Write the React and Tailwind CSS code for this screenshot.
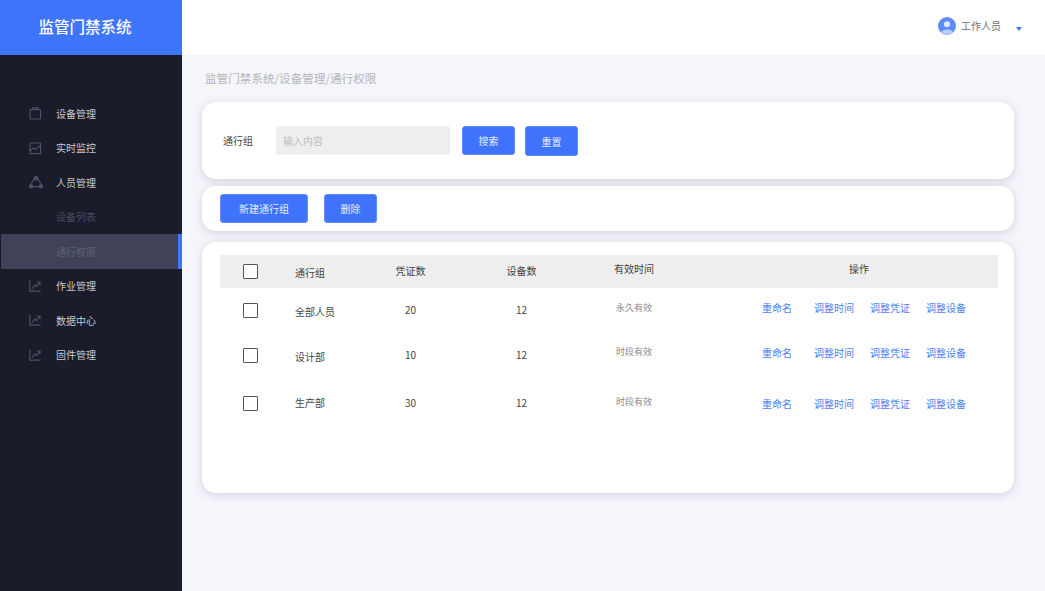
import React from 'react';

const cardShadow = 'shadow-[0_2px_9px_rgba(70,70,100,0.2)]';
const btn = 'flex items-center justify-center rounded-[3px] bg-[#3f73fb] border border-[#5d8afc] text-[10px] text-[#e6ecff]';

const IconBag = () => (
  <svg width="13" height="13" viewBox="0 0 13 13" fill="none" stroke="#4b5069" strokeWidth="1.2">
    <rect x="1" y="2.6" width="10.6" height="9.4" rx="0.8" />
    <path d="M3.6 2.6 V0.8 H9 V2.6" />
  </svg>
);

const IconMonitor = () => (
  <svg width="13" height="13" viewBox="0 0 13 13" fill="none" stroke="#4b5069" strokeWidth="1.2">
    <rect x="1" y="1" width="10.6" height="10.6" rx="0.6" />
    <path d="M1.4 9 L4.4 6 L6.6 7.6 L11 3.8" />
  </svg>
);

const IconPeople = () => (
  <svg width="14" height="13" viewBox="0 0 14 13" fill="none" stroke="#4b5069" strokeWidth="1.1">
    <path d="M5 2.8 L2 8.6 M9 2.8 L12 8.6 M3.6 10.6 H10.4" />
    <circle cx="7" cy="2.2" r="1.7" fill="#4b5069" />
    <circle cx="2" cy="10.2" r="1.7" fill="#4b5069" />
    <circle cx="12" cy="10.2" r="1.7" fill="#4b5069" />
  </svg>
);

const IconTrend = () => (
  <svg width="12" height="12" viewBox="0 0 12 12" fill="none" stroke="#4b5069" strokeWidth="1.2">
    <path d="M0.8 0.6 V11.2 H11.6" />
    <path d="M3 8.6 L6 5 L7.6 6.6 L10.8 2.4" />
    <path d="M7.8 2 H11 V5" />
  </svg>
);

const menu = [
  { label: '设备管理', icon: <IconBag /> },
  { label: '实时监控', icon: <IconMonitor /> },
  { label: '人员管理', icon: <IconPeople /> },
  { label: '设备列表', sub: true },
  { label: '通行权限', sub: true, active: true },
  { label: '作业管理', icon: <IconTrend /> },
  { label: '数据中心', icon: <IconTrend /> },
  { label: '固件管理', icon: <IconTrend /> },
];

const rows = [
  { name: '全部人员', count: 20, time: '永久有效', h: 'h-[45px]', nameCls: 'mt-px', countCls: 'mb-[2px]', timeCls: 'mb-[6px]', opsCls: 'mb-[7px]' },
  { name: '设计部', count: 10, time: '时段有效', h: 'h-[45px]', nameCls: 'mt-px', countCls: 'mb-[2px]', timeCls: 'mb-[7px]', opsCls: 'mb-[7px]' },
  { name: '生产部', count: 30, time: '时段有效', h: 'h-[51px]', nameCls: 'mb-[3px]', countCls: 'mb-[3px]', timeCls: 'mb-[3px]', opsCls: 'mb-px' },
];

const Checkbox = () => <div className="w-[15px] h-[15px] border border-[#555] rounded-[1px] bg-white" />;

const cols = 'grid grid-cols-[75px_75px_81px_141px_84px_1fr] items-center';

const App = () => (
  <div className="flex w-full h-[591px] overflow-hidden bg-[#f5f6fb] font-['Noto_Sans_CJK_SC',sans-serif]">
    {/* Sidebar */}
    <aside className="w-[182px] shrink-0 bg-[#1a1d29]">
      <div className="h-[55px] bg-[#3f75fd] flex items-center justify-center pr-[12px] pb-[2px] text-white text-[15.5px] font-medium">
        监管门禁系统
      </div>
      <nav className="pt-[41px]">
        {menu.map(({ label, icon, sub, active }) => (
          <div
            key={label}
            className={`h-[34.5px] flex items-center pl-[56px] text-[10px] relative ${active ? 'bg-[#3f4259] ml-px text-[#5f6379]' : sub ? 'text-[#484c61]' : 'text-[#c6c8d0]'}`}
          >
            {icon && <span className="absolute left-[29px] top-[11px] flex">{icon}</span>}
            <span className={active ? '-ml-px' : ''}>{label}</span>
            {active && <span className="absolute right-0 top-0 bottom-0 w-[4px] bg-[#3f75fd]" />}
          </div>
        ))}
      </nav>
    </aside>

    {/* Main */}
    <main className="flex-1 min-w-0">
      <header className="h-[55px] bg-white flex items-center justify-end pr-[23px]">
        <svg width="18" height="18" viewBox="0 0 18 18" className="mr-[5px] mt-[-3px]">
          <circle cx="9" cy="9" r="9" fill="#5b8cf8" />
          <circle cx="9" cy="7.2" r="3" fill="#dfe8fd" />
          <path d="M3 15.5 C4 11.5 14 11.5 15 15.5 C13 18.6 5 18.6 3 15.5 Z" fill="#b7cbfb" />
        </svg>
        <span className="text-[10px] text-[#6b6f7b] mr-[15px] mb-[5px]">工作人员</span>
        <span className="w-0 h-0 border-x-[3px] border-x-transparent border-t-[4px] border-t-[#3f75fd] mt-[2px]" />
      </header>

      <div className="pl-[20px] pr-[31px]">
        <p className="pl-[3px] pt-[13px] h-[47px] text-[11.6px] leading-[20px] text-[#b4b5b9]">监管门禁系统/设备管理/通行权限</p>

        <section className={`h-[77px] bg-white rounded-[14px] flex items-center pl-[21px] ${cardShadow}`}>
          <span className="w-[53px] text-[10px] text-[#444]">通行组</span>
          <div className="w-[174px] h-[29px] bg-[#eeeeee] rounded-[3px] flex items-center pl-[7px] text-[10px] text-[#bdbdbd]">输入内容</div>
          <div className={`${btn} w-[53px] h-[29px] ml-[12px]`}>搜索</div>
          <div className={`${btn} w-[53px] h-[30px] ml-[10px] mt-px`}>重置</div>
        </section>

        <section className={`h-[45px] mt-[7px] bg-white rounded-[14px] flex items-center pl-[18px] ${cardShadow}`}>
          <div className={`${btn} w-[88px] h-[29px]`}>新建通行组</div>
          <div className={`${btn} w-[53px] h-[29px] ml-[16px]`}>删除</div>
        </section>

        <section className={`h-[251px] mt-[11px] bg-white rounded-[14px] pt-[13px] pl-[18px] pr-[16px] ${cardShadow}`}>
          <div className={`${cols} h-[33px] bg-[#eeeeee] text-[10px] text-[#444]`}>
            <div className="pl-[23px]"><Checkbox /></div>
            <span className="mt-[1px]">通行组</span>
            <span className="text-center mb-[3px]">凭证数</span>
            <span className="text-center mb-[3px]">设备数</span>
            <span className="text-center mb-[7px]">有效时间</span>
            <span className="text-center pl-[44px] mb-[7px]">操作</span>
          </div>
          {rows.map(r => (
            <div key={r.name} className={`${cols} ${r.h} text-[10px] text-[#444]`}>
              <div className="pl-[23px]"><Checkbox /></div>
              <span className={r.nameCls}>{r.name}</span>
              <span className={`text-center ${r.countCls}`}>{r.count}</span>
              <span className={`text-center ${r.countCls}`}>12</span>
              <span className={`text-center text-[9px] text-[#8a8a8a] ${r.timeCls}`}>{r.time}</span>
              <div className={`flex pl-[86px] text-[#4d83f5] ${r.opsCls}`}>
                <span className="mr-[22px]">重命名</span>
                <span className="mr-[16px]">调整时间</span>
                <span className="mr-[16px]">调整凭证</span>
                <span>调整设备</span>
              </div>
            </div>
          ))}
        </section>
      </div>
    </main>
  </div>
);

export default App;
